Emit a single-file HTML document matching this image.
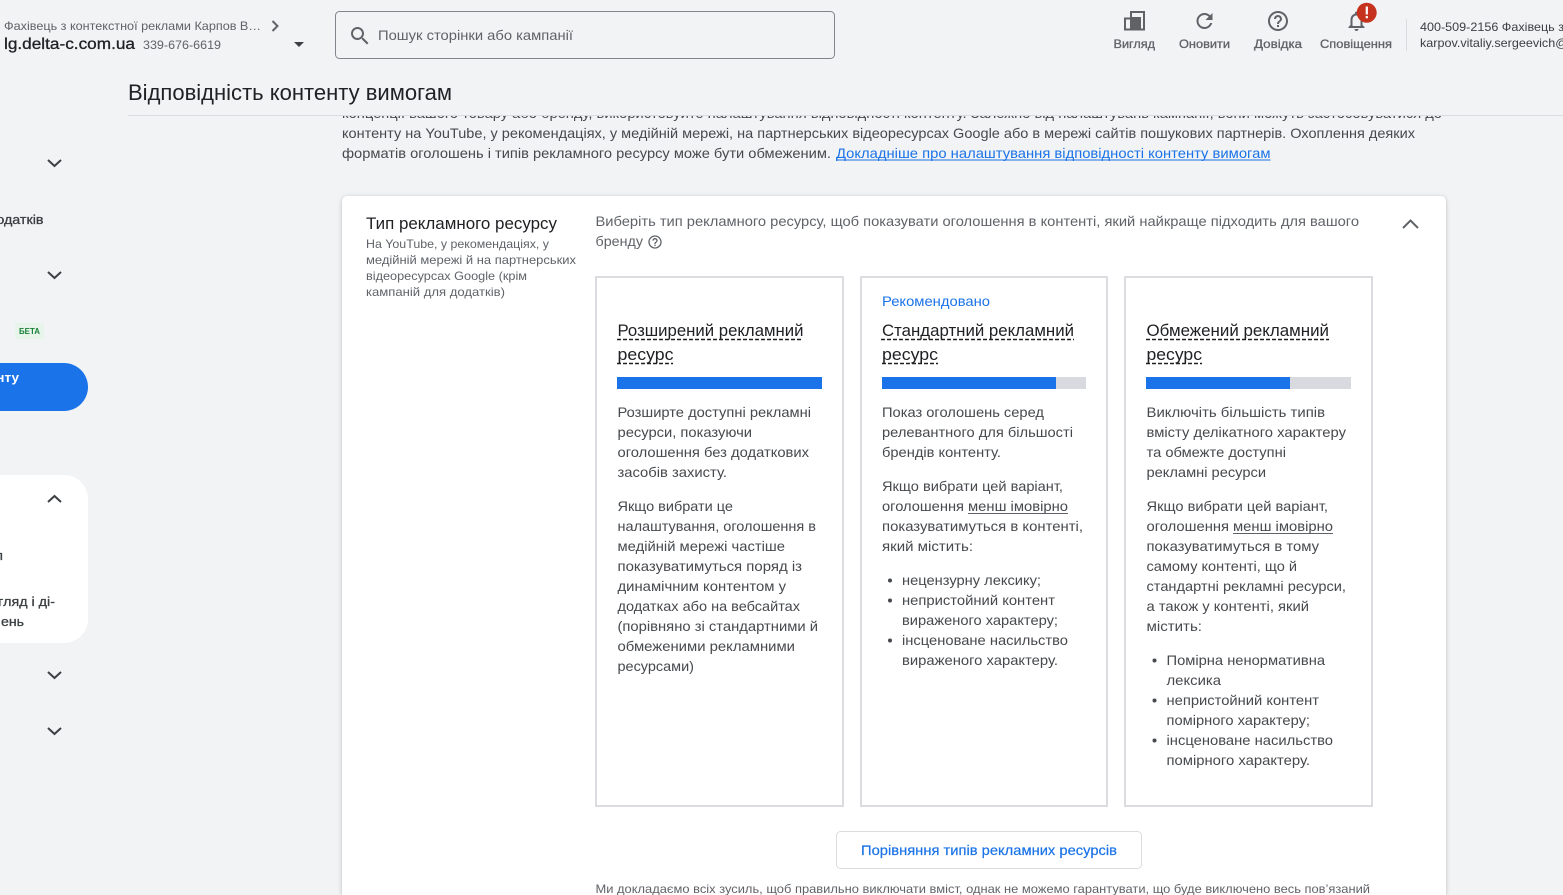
<!DOCTYPE html>
<html lang="uk"><head><meta charset="utf-8"><title>Відповідність контенту вимогам</title>
<style>
html,body{margin:0;padding:0;width:1563px;height:895px;overflow:hidden;background:#f1f3f4}
svg{display:block;position:absolute;left:0;top:0}
text{font-family:"Liberation Sans",Arial,sans-serif;white-space:pre}
.b{font-size:14px;fill:#46494d}
.s{font-size:14px;fill:#5f6368}
.x{font-size:12px;fill:#5f6368}
.l{font-size:12px;fill:#5f6368;stroke:#5f6368;stroke-width:.3}
.t{font-size:17px;fill:#202124}
.n{font-size:13px;fill:#3c4043;stroke:#3c4043;stroke-width:.3}
.chev{fill:none;stroke:#3c4043;stroke-width:2}
.i{fill:#5f6368}
.u{stroke:#202124;stroke-width:1.5;stroke-dasharray:4 2}
</style></head><body>
<svg width="1563" height="895" viewBox="0 0 1563 895" xmlns="http://www.w3.org/2000/svg">
<rect width="1563" height="895" fill="#f1f3f4"/>

<!-- top body text -->
<text class="b" x="342" y="118" textLength="1100" lengthAdjust="spacingAndGlyphs">концепції вашого товару або бренду, використовуйте налаштування відповідності контенту. Залежно від налаштувань кампанії, вони можуть застосовуватися до</text>
<text class="b" x="342" y="138" textLength="1073" lengthAdjust="spacingAndGlyphs">контенту на YouTube, у рекомендаціях, у медійній мережі, на партнерських відеоресурсах Google або в мережі сайтів пошукових партнерів. Охоплення деяких</text>
<text class="b" x="342" y="158" textLength="489" lengthAdjust="spacingAndGlyphs">форматів оголошень і типів рекламного ресурсу може бути обмеженим.</text>
<text class="b" x="836" y="158" textLength="434.500" lengthAdjust="spacingAndGlyphs" style="fill:#1a73e8">Докладніше про налаштування відповідності контенту вимогам</text>
<line x1="836" x2="1270.500" y1="160" y2="160" stroke="#1a73e8"/>

<!-- header cover -->
<rect x="0" y="0" width="1563" height="115" fill="#f1f3f4"/>
<line x1="128" x2="1563" y1="115.500" y2="115.500" stroke="#dadce0"/>

<text x="4" y="30" class="x" textLength="257" lengthAdjust="spacingAndGlyphs">Фахівець з контекстної реклами Карпов В…</text>
<polyline points="272.500,21 277.500,26 272.500,31" fill="none" stroke="#5f6368" stroke-width="2"/>
<text x="4" y="49" textLength="131" lengthAdjust="spacingAndGlyphs" style="font-size:16px;fill:#202124;stroke:#202124;stroke-width:.3">lg.delta-c.com.ua</text>
<text x="143" y="49" class="x" textLength="78" lengthAdjust="spacingAndGlyphs">339-676-6619</text>
<polygon points="294,42 304,42 299,47" fill="#3c4043"/>

<rect x="335.500" y="11.500" width="499" height="47" rx="4" fill="#f1f3f4" stroke="#80868b"/>
<path transform="translate(348 24)" class="i" d="M15.5 14h-.79l-.28-.27C15.41 12.59 16 11.11 16 9.500 16 5.910 13.090 3 9.500 3S3 5.910 3 9.500 5.910 16 9.500 16c1.610 0 3.090-.59 4.230-1.570l.27.280v.790l5 4.990L20.490 19l-4.990-5zm-6 0C7.010 14 5 11.990 5 9.500S7.010 5 9.500 5 14 7.010 14 9.500 11.990 14 9.500 14z"/>
<text x="378" y="40" class="s" textLength="195" lengthAdjust="spacingAndGlyphs">Пошук сторінки або кампанії</text>

<text x="128" y="100" textLength="324" lengthAdjust="spacingAndGlyphs" style="font-size:22px;fill:#202124">Відповідність контенту вимогам</text>

<!-- header icons -->
<path d="M1125 18.500h6v-6.500h13v17.500h-19z" fill="none" stroke="#5f6368" stroke-width="2"/>
<rect x="1130" y="17" width="11" height="12" class="i"/>
<path transform="translate(1192.500 9)" class="i" d="M17.650 6.350C16.200 4.900 14.210 4 12 4c-4.420 0-7.990 3.580-7.990 8s3.570 8 7.990 8c3.730 0 6.840-2.550 7.730-6h-2.080c-.82 2.330-3.040 4-5.650 4-3.310 0-6-2.690-6-6s2.690-6 6-6c1.660 0 3.140.69 4.220 1.780L13 11h7V4l-2.350 2.350z"/>
<path transform="translate(1266 9)" class="i" d="M11 18h2v-2h-2v2zm1-16C6.480 2 2 6.480 2 12s4.480 10 10 10 10-4.480 10-10S17.520 2 12 2zm0 18c-4.410 0-8-3.590-8-8s3.590-8 8-8 8 3.590 8 8-3.590 8-8 8zm0-14c-2.210 0-4 1.790-4 4h2c0-1.100.9-2 2-2s2 .9 2 2c0 2-3 1.750-3 5h2c0-2.250 3-2.500 3-5 0-2.210-1.790-4-4-4z"/>
<path transform="translate(1344.500 9)" class="i" d="M12 22c1.100 0 2-.9 2-2h-4c0 1.100.9 2 2 2zm6-6v-5c0-3.070-1.630-5.640-4.500-6.320V4c0-.83-.67-1.500-1.500-1.500s-1.500.67-1.500 1.500v.68C7.640 5.360 6 7.920 6 11v5l-2 2v1h16v-1l-2-2zm-2 1H8v-6c0-2.480 1.510-4.500 4-4.500s4 2.020 4 4.500v6z"/>
<circle cx="1366.700" cy="12.700" r="10" fill="#c5331f"/>
<rect x="1365.700" y="6.500" width="2.200" height="8" fill="#fff"/><rect x="1365.700" y="16" width="2.200" height="2.300" fill="#fff"/>

<text x="1113.500" y="48" class="l" textLength="41.500" lengthAdjust="spacingAndGlyphs">Вигляд</text>
<text x="1179" y="48" class="l" textLength="51" lengthAdjust="spacingAndGlyphs">Оновити</text>
<text x="1254" y="48" class="l" textLength="48" lengthAdjust="spacingAndGlyphs">Довідка</text>
<text x="1320" y="48" class="l" textLength="72" lengthAdjust="spacingAndGlyphs">Сповіщення</text>
<line x1="1406.500" x2="1406.500" y1="19" y2="51" stroke="#dadce0"/>
<text x="1420" y="31" textLength="144" lengthAdjust="spacingAndGlyphs" style="font-size:12px;fill:#3c4043">400-509-2156 Фахівець з</text>
<text x="1420" y="47" textLength="148" lengthAdjust="spacingAndGlyphs" style="font-size:12px;fill:#3c4043">karpov.vitaliy.sergeevich@</text>

<!-- sidebar -->
<polyline class="chev" points="48,160 54.500,166 61,160"/>
<polyline class="chev" points="48,272 54.500,278 61,272"/>
<polyline class="chev" points="48,672 54.500,678 61,672"/>
<polyline class="chev" points="48,728 54.500,734 61,728"/>
<text x="-12" y="224" class="n" textLength="55.500" lengthAdjust="spacingAndGlyphs">додатків</text>
<rect x="15" y="323" width="29" height="16" rx="2" fill="#e6f4ea"/>
<text x="19" y="334" textLength="21" lengthAdjust="spacingAndGlyphs" style="font-size:8px;font-weight:bold;fill:#188038">БЕТА</text>
<path d="M-30 363H64a24 24 0 0 1 0 48H-30z" fill="#1a73e8"/>
<text x="-41" y="382" textLength="60" lengthAdjust="spacingAndGlyphs" style="font-size:13px;font-weight:bold;fill:#fff">контенту</text>
<path d="M-30 475H64a24 24 0 0 1 24 24V619a24 24 0 0 1-24 24H-30z" fill="#fff"/>
<polyline class="chev" points="48,502 54.500,496 61,502"/>
<text x="-5" y="560" class="n" textLength="8" lengthAdjust="spacingAndGlyphs">п</text>
<text x="-36" y="606" class="n" textLength="91" lengthAdjust="spacingAndGlyphs">Перегляд і ді-</text>
<text x="1" y="626" class="n" textLength="23" lengthAdjust="spacingAndGlyphs">ень</text>

<!-- main card -->
<path d="M342 895V201a5 5 0 0 1 5-5H1441a5 5 0 0 1 5 5V895z" fill="#fff" style="filter:drop-shadow(0 1px 2px rgba(60,64,67,.3))"/>
<text x="366" y="229" class="t" textLength="191" lengthAdjust="spacingAndGlyphs">Тип рекламного ресурсу</text>
<text x="366" y="248" class="x" textLength="183" lengthAdjust="spacingAndGlyphs">На YouTube, у рекомендаціях, у</text>
<text x="366" y="264" class="x" textLength="210" lengthAdjust="spacingAndGlyphs">медійній мережі й на партнерських</text>
<text x="366" y="280" class="x" textLength="161" lengthAdjust="spacingAndGlyphs">відеоресурсах Google (крім</text>
<text x="366" y="296" class="x" textLength="139" lengthAdjust="spacingAndGlyphs">кампаній для додатків)</text>

<text x="595.500" y="226" class="s" textLength="763.500" lengthAdjust="spacingAndGlyphs">Виберіть тип рекламного ресурсу, щоб показувати оголошення в контенті, який найкраще підходить для вашого</text>
<text x="595.500" y="246" class="s" textLength="47.500" lengthAdjust="spacingAndGlyphs">бренду</text>
<path transform="translate(647 234) scale(.667)" class="i" d="M11 18h2v-2h-2v2zm1-16C6.480 2 2 6.480 2 12s4.480 10 10 10 10-4.480 10-10S17.520 2 12 2zm0 18c-4.410 0-8-3.590-8-8s3.590-8 8-8 8 3.590 8 8-3.590 8-8 8zm0-14c-2.210 0-4 1.790-4 4h2c0-1.100.9-2 2-2s2 .9 2 2c0 2-3 1.750-3 5h2c0-2.250 3-2.500 3-5 0-2.210-1.790-4-4-4z"/>
<polyline points="1403,228 1410.500,220.500 1418,228" fill="none" stroke="#5f6368" stroke-width="2"/>

<!-- option cards -->
<rect x="596" y="277" width="247" height="529" fill="#fff" stroke="#dadce0" stroke-width="2"/>
<rect x="861" y="277" width="246" height="529" fill="#fff" stroke="#dadce0" stroke-width="2"/>
<rect x="1125" y="277" width="247" height="529" fill="#fff" stroke="#dadce0" stroke-width="2"/>

<!-- card 1 -->
<text x="617.500" y="336" class="t" textLength="186" lengthAdjust="spacingAndGlyphs">Розширений рекламний</text>
<text x="617.500" y="360" class="t" textLength="56" lengthAdjust="spacingAndGlyphs">ресурс</text>
<line class="u" x1="617" x2="803" y1="339.500" y2="339.500"/><line class="u" x1="617" x2="673" y1="363.500" y2="363.500"/>
<rect x="617" y="377" width="205" height="12" fill="#1a73e8"/>
<text class="b" x="617.500" y="417" textLength="193.500" lengthAdjust="spacingAndGlyphs">Розширте доступні рекламні</text>
<text class="b" x="617.500" y="437" textLength="134.500" lengthAdjust="spacingAndGlyphs">ресурси, показуючи</text>
<text class="b" x="617.500" y="457" textLength="191.500" lengthAdjust="spacingAndGlyphs">оголошення без додаткових</text>
<text class="b" x="617.500" y="477" textLength="109.500" lengthAdjust="spacingAndGlyphs">засобів захисту.</text>
<text class="b" x="617.500" y="511" textLength="115.500" lengthAdjust="spacingAndGlyphs">Якщо вибрати це</text>
<text class="b" x="617.500" y="531" textLength="198.500" lengthAdjust="spacingAndGlyphs">налаштування, оголошення в</text>
<text class="b" x="617.500" y="551" textLength="167.500" lengthAdjust="spacingAndGlyphs">медійній мережі частіше</text>
<text class="b" x="617.500" y="571" textLength="184.500" lengthAdjust="spacingAndGlyphs">показуватимуться поряд із</text>
<text class="b" x="617.500" y="591" textLength="168.500" lengthAdjust="spacingAndGlyphs">динамічним контентом у</text>
<text class="b" x="617.500" y="611" textLength="182.500" lengthAdjust="spacingAndGlyphs">додатках або на вебсайтах</text>
<text class="b" x="617.500" y="631" textLength="200.500" lengthAdjust="spacingAndGlyphs">(порівняно зі стандартними й</text>
<text class="b" x="617.500" y="651" textLength="177.500" lengthAdjust="spacingAndGlyphs">обмеженими рекламними</text>
<text class="b" x="617.500" y="671" textLength="76.500" lengthAdjust="spacingAndGlyphs">ресурсами)</text>

<!-- card 2 -->
<text class="b" x="882" y="306" textLength="108" lengthAdjust="spacingAndGlyphs" style="fill:#1a73e8">Рекомендовано</text>
<text x="882" y="336" class="t" textLength="192" lengthAdjust="spacingAndGlyphs">Стандартний рекламний</text>
<text x="882" y="360" class="t" textLength="56" lengthAdjust="spacingAndGlyphs">ресурс</text>
<line class="u" x1="881" x2="1074" y1="339.500" y2="339.500"/><line class="u" x1="882" x2="938" y1="363.500" y2="363.500"/>
<rect x="882" y="377" width="204" height="12" fill="#d9dadf"/><rect x="882" y="377" width="174" height="12" fill="#1a73e8"/>
<text class="b" x="882" y="417" textLength="162" lengthAdjust="spacingAndGlyphs">Показ оголошень серед</text>
<text class="b" x="882" y="437" textLength="191" lengthAdjust="spacingAndGlyphs">релевантного для більшості</text>
<text class="b" x="882" y="457" textLength="119" lengthAdjust="spacingAndGlyphs">брендів контенту.</text>
<text class="b" x="882" y="491" textLength="181" lengthAdjust="spacingAndGlyphs">Якщо вибрати цей варіант,</text>
<text class="b" x="882" y="511" textLength="82" lengthAdjust="spacingAndGlyphs">оголошення</text>
<text class="b" x="968" y="511" textLength="100" lengthAdjust="spacingAndGlyphs">менш імовірно</text>
<line x1="968" x2="1068" y1="513.500" y2="513.500" stroke="#5f6368"/>
<text class="b" x="882" y="531" textLength="201" lengthAdjust="spacingAndGlyphs">показуватимуться в контенті,</text>
<text class="b" x="882" y="551" textLength="91" lengthAdjust="spacingAndGlyphs">який містить:</text>
<circle cx="890" cy="580.500" r="2" fill="#46494d"/><circle cx="890" cy="600.500" r="2" fill="#46494d"/><circle cx="890" cy="640.500" r="2" fill="#46494d"/>
<text class="b" x="902" y="585" textLength="139" lengthAdjust="spacingAndGlyphs">нецензурну лексику;</text>
<text class="b" x="902" y="605" textLength="153" lengthAdjust="spacingAndGlyphs">непристойний контент</text>
<text class="b" x="902" y="625" textLength="156" lengthAdjust="spacingAndGlyphs">вираженого характеру;</text>
<text class="b" x="902" y="645" textLength="166" lengthAdjust="spacingAndGlyphs">інсценоване насильство</text>
<text class="b" x="902" y="665" textLength="156" lengthAdjust="spacingAndGlyphs">вираженого характеру.</text>

<!-- card 3 -->
<text x="1146.500" y="336" class="t" textLength="182.500" lengthAdjust="spacingAndGlyphs">Обмежений рекламний</text>
<text x="1146.500" y="360" class="t" textLength="55.500" lengthAdjust="spacingAndGlyphs">ресурс</text>
<line class="u" x1="1146" x2="1329" y1="339.500" y2="339.500"/><line class="u" x1="1146" x2="1202" y1="363.500" y2="363.500"/>
<rect x="1146" y="377" width="205" height="12" fill="#d9dadf"/><rect x="1146" y="377" width="144" height="12" fill="#1a73e8"/>
<text class="b" x="1146.500" y="417" textLength="178.500" lengthAdjust="spacingAndGlyphs">Виключіть більшість типів</text>
<text class="b" x="1146.500" y="437" textLength="199.500" lengthAdjust="spacingAndGlyphs">вмісту делікатного характеру</text>
<text class="b" x="1146.500" y="457" textLength="139.500" lengthAdjust="spacingAndGlyphs">та обмежте доступні</text>
<text class="b" x="1146.500" y="477" textLength="119.500" lengthAdjust="spacingAndGlyphs">рекламні ресурси</text>
<text class="b" x="1146.500" y="511" textLength="181.500" lengthAdjust="spacingAndGlyphs">Якщо вибрати цей варіант,</text>
<text class="b" x="1146.500" y="531" textLength="82.500" lengthAdjust="spacingAndGlyphs">оголошення</text>
<text class="b" x="1233" y="531" textLength="100" lengthAdjust="spacingAndGlyphs">менш імовірно</text>
<line x1="1233" x2="1333" y1="533.500" y2="533.500" stroke="#5f6368"/>
<text class="b" x="1146.500" y="551" textLength="172.500" lengthAdjust="spacingAndGlyphs">показуватимуться в тому</text>
<text class="b" x="1146.500" y="571" textLength="150.500" lengthAdjust="spacingAndGlyphs">самому контенті, що й</text>
<text class="b" x="1146.500" y="591" textLength="199.500" lengthAdjust="spacingAndGlyphs">стандартні рекламні ресурси,</text>
<text class="b" x="1146.500" y="611" textLength="162.500" lengthAdjust="spacingAndGlyphs">а також у контенті, який</text>
<text class="b" x="1146.500" y="631" textLength="55.500" lengthAdjust="spacingAndGlyphs">містить:</text>
<circle cx="1154.500" cy="660.500" r="2" fill="#46494d"/><circle cx="1154.500" cy="700.500" r="2" fill="#46494d"/><circle cx="1154.500" cy="740.500" r="2" fill="#46494d"/>
<text class="b" x="1166.500" y="665" textLength="158.500" lengthAdjust="spacingAndGlyphs">Помірна ненормативна</text>
<text class="b" x="1166.500" y="685" textLength="54.500" lengthAdjust="spacingAndGlyphs">лексика</text>
<text class="b" x="1166.500" y="705" textLength="152.500" lengthAdjust="spacingAndGlyphs">непристойний контент</text>
<text class="b" x="1166.500" y="725" textLength="143.500" lengthAdjust="spacingAndGlyphs">помірного характеру;</text>
<text class="b" x="1166.500" y="745" textLength="166.500" lengthAdjust="spacingAndGlyphs">інсценоване насильство</text>
<text class="b" x="1166.500" y="765" textLength="143.500" lengthAdjust="spacingAndGlyphs">помірного характеру.</text>

<!-- button -->
<rect x="836.500" y="831.500" width="305" height="37" rx="4" fill="#fff" stroke="#dadce0"/>
<text x="861" y="855" textLength="256" lengthAdjust="spacingAndGlyphs" style="font-size:14px;fill:#1a73e8;stroke:#1a73e8;stroke-width:.2">Порівняння типів рекламних ресурсів</text>
<text x="595.500" y="893" class="x" textLength="774.500" lengthAdjust="spacingAndGlyphs">Ми докладаємо всіх зусиль, щоб правильно виключати вміст, однак не можемо гарантувати, що буде виключено весь пов’язаний</text>
</svg>
</body></html>
